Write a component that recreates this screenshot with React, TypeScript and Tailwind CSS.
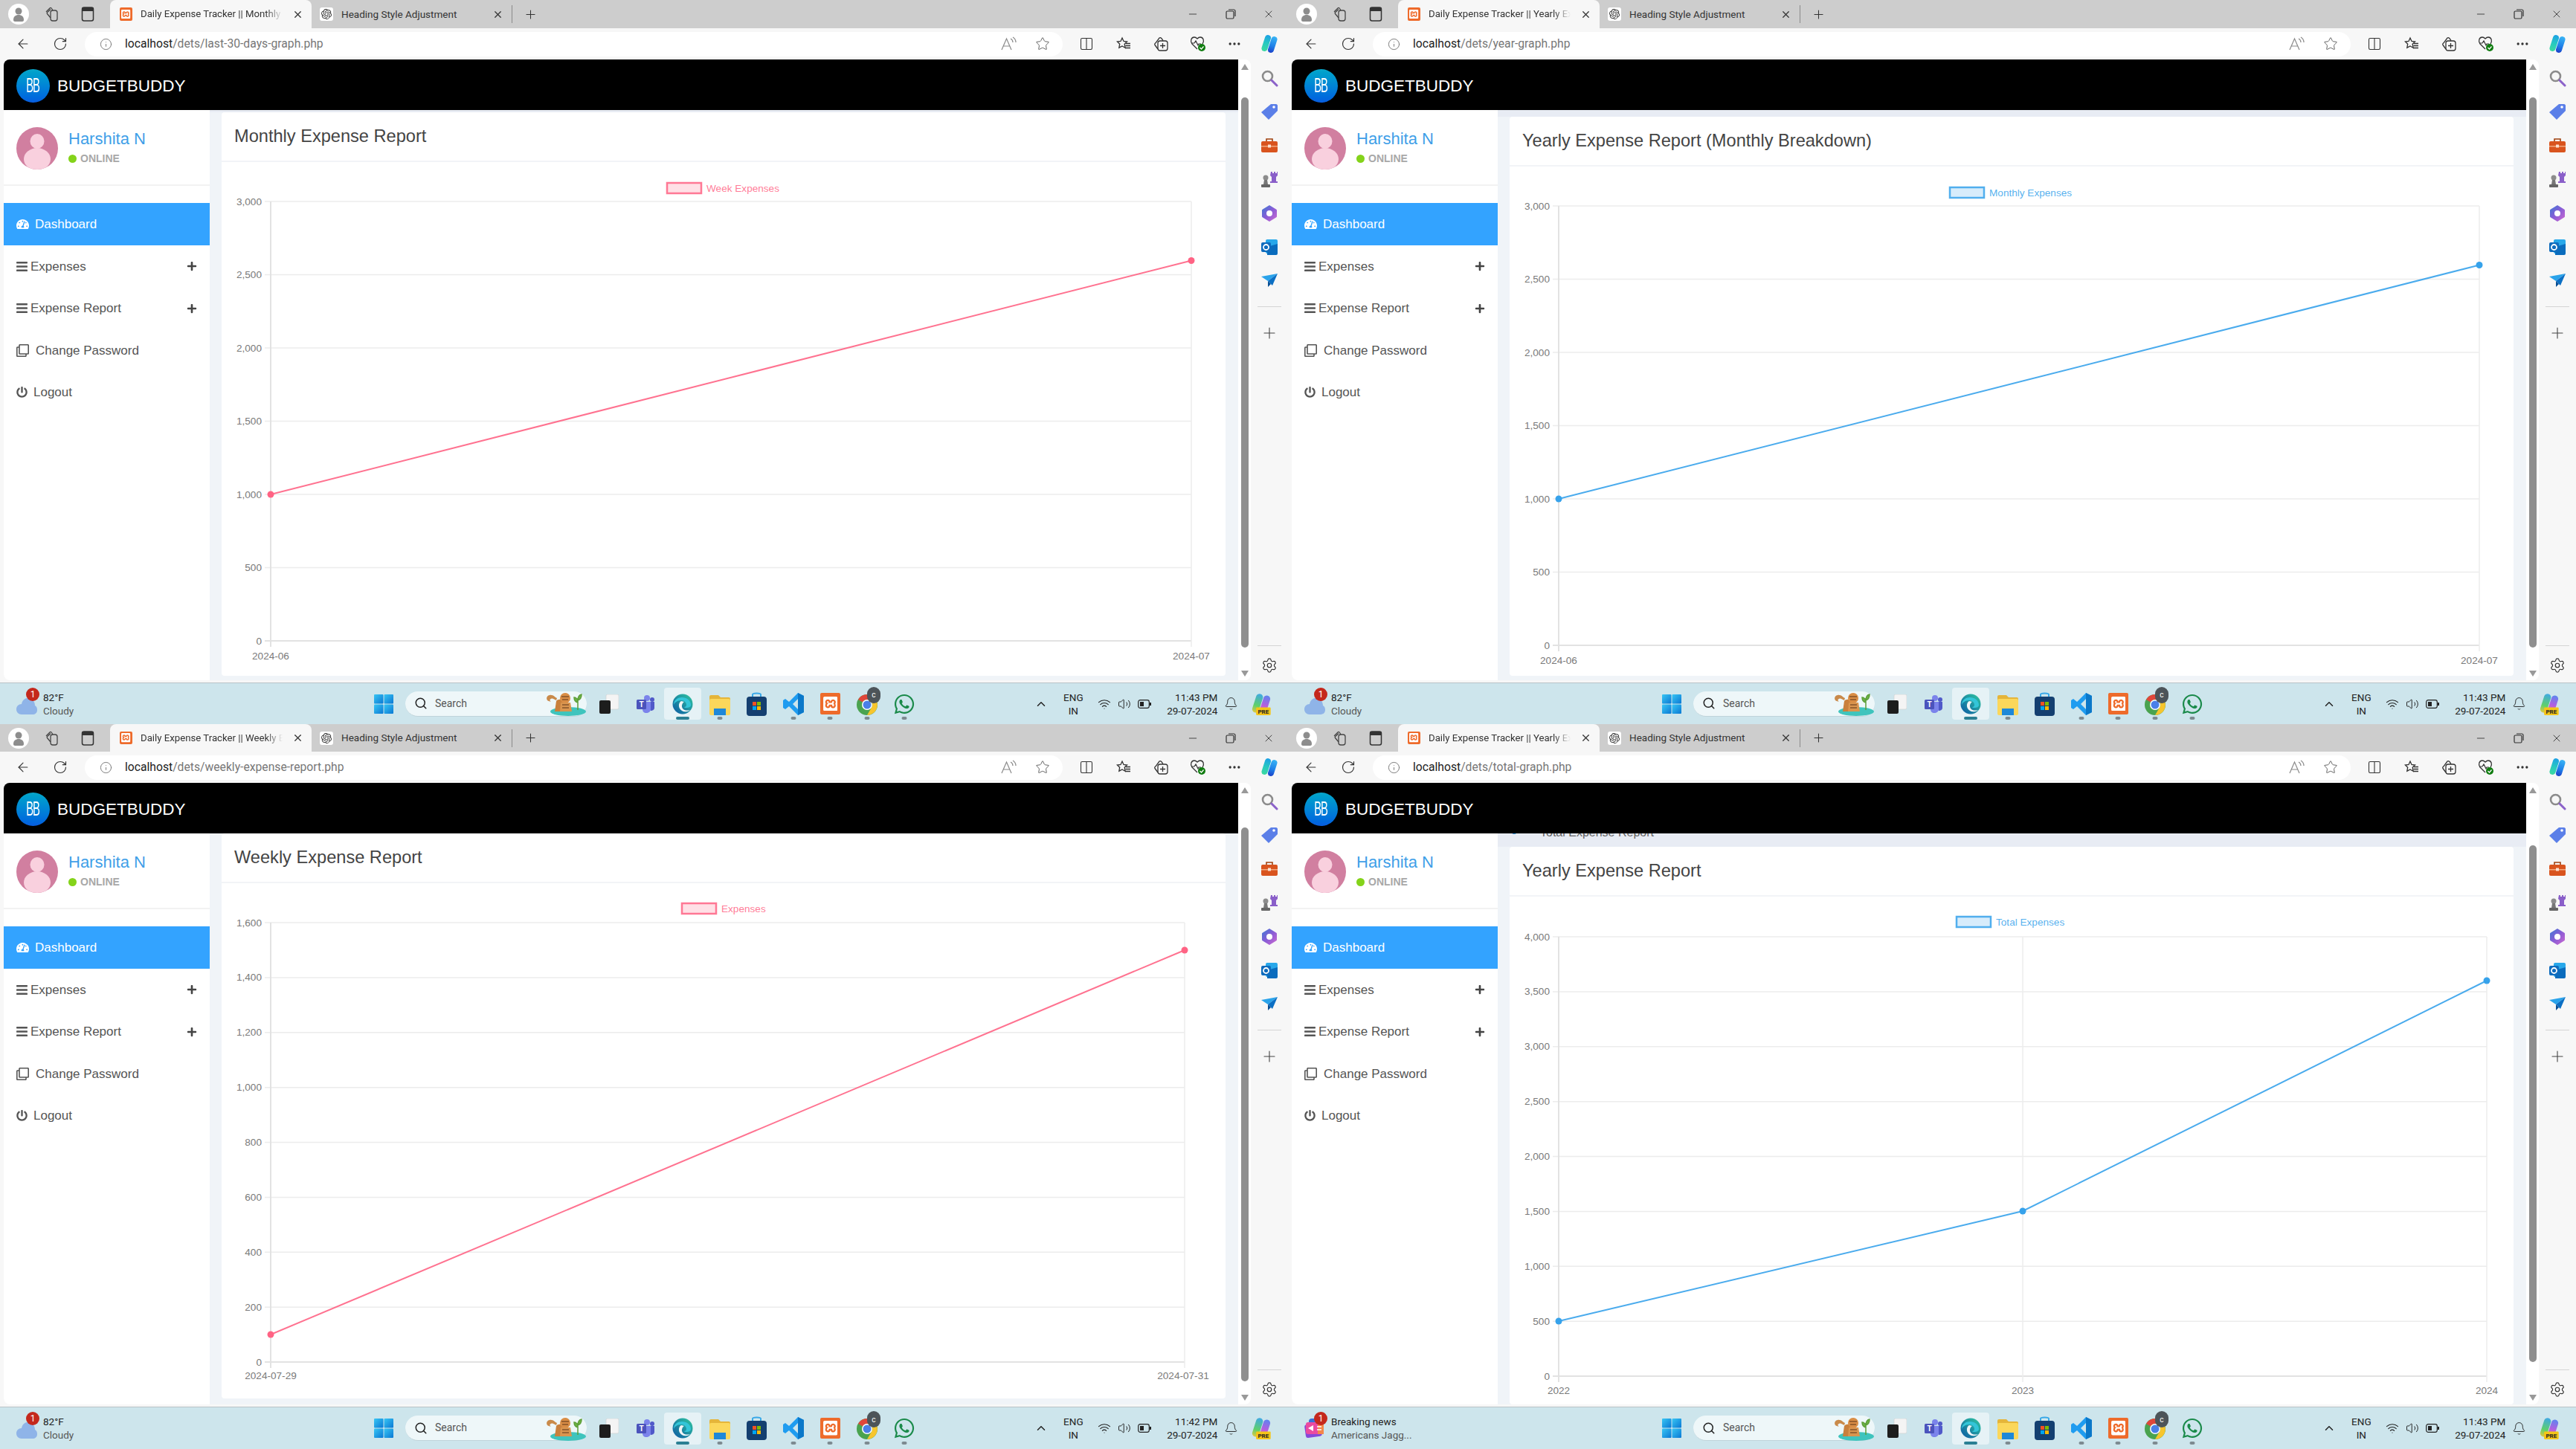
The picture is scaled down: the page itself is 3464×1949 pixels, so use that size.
import React from 'react';
import { ArrowLeft, RotateCw, Info, Star, Plus, X, Minus, Search, Settings, Bell, ChevronUp, Wifi, Volume2, Columns2, Ellipsis } from 'lucide-react';
import { FaBars, FaPlus, FaRegClone, FaPowerOff, FaTachometerAlt, FaWhatsapp } from 'react-icons/fa';
import { SiOpenai, SiXampp } from 'react-icons/si';

const Copilot = ({ s = 26, pre = false }: { s?: number; pre?: boolean }) => (
  <svg width={s} height={s} viewBox="0 0 26 26">
    <defs>
      <linearGradient id="cpa" gradientUnits="userSpaceOnUse" x1="12" y1="1" x2="5" y2="24"><stop offset="0" stopColor="#1c9fe8" /><stop offset=".5" stopColor="#27c9c0" /><stop offset="1" stopColor="#3fdc9a" /></linearGradient>
      <linearGradient id="cpb" gradientUnits="userSpaceOnUse" x1="21" y1="3" x2="14" y2="25"><stop offset="0" stopColor="#39b6f5" /><stop offset=".6" stopColor="#1f7fe8" /><stop offset="1" stopColor="#1c3fc8" /></linearGradient>
      <linearGradient id="cpc" gradientUnits="userSpaceOnUse" x1="12" y1="1" x2="5" y2="24"><stop offset="0" stopColor="#3fa8e8" /><stop offset=".6" stopColor="#5fd06a" /><stop offset="1" stopColor="#f0c83c" /></linearGradient>
      <linearGradient id="cpd" gradientUnits="userSpaceOnUse" x1="21" y1="3" x2="14" y2="25"><stop offset="0" stopColor="#5a86f0" /><stop offset=".5" stopColor="#b060e0" /><stop offset="1" stopColor="#f06ab0" /></linearGradient>
    </defs>
    <path d="M11 5 L6.500 19" stroke={pre ? 'url(#cpc)' : 'url(#cpa)'} strokeWidth="8" strokeLinecap="round" fill="none" />
    <path d="M19.500 7 L15 21" stroke={pre ? 'url(#cpd)' : 'url(#cpb)'} strokeWidth="8" strokeLinecap="round" fill="none" />
    {pre && <rect x="7" y="17" width="17" height="9" rx="1" fill="#f5c518" />}
    {pre && <text x="15.500" y="24.500" fontSize="7" fontWeight="700" textAnchor="middle" fill="#222" fontFamily="Roboto">PRE</text>}
  </svg>
);

const Profile = () => (
  <div className="w-[28px] h-[28px] rounded-full bg-white flex items-center justify-center shrink-0">
    <svg width="16" height="20" viewBox="0 0 16 20"><circle cx="8" cy="6" r="4.500" fill="#8d8d8d" /><path d="M1 18c0-5 3-7 7-7s7 2 7 7c0 1-1 2-2 2H3c-1 0-2-1-2-2z" fill="#8d8d8d" /></svg>
  </div>
);
const CollectionsTab = () => (
  <svg width="20" height="22" viewBox="0 0 20 22" fill="none" stroke="#444" strokeWidth="1.300"><rect x="8" y="6" width="9" height="14" rx="3" /><path d="M8 16 3.500 10.500c-.8-1 0-2 .8-2.600L8 4.500M11 6 9.500 3.500C9 2.500 8 2 7 3L2 8" /></svg>
);
const TabSide = () => (
  <svg width="18" height="22" viewBox="0 0 18 22"><rect x="1.500" y="2" width="15" height="18" rx="2.500" fill="none" stroke="#333" strokeWidth="1.500" /><rect x="1.500" y="2" width="15" height="5" fill="#333" /></svg>
);

const FavStar = () => (
  <svg width="20" height="20" viewBox="0 0 20 20" fill="none" stroke="#333" strokeWidth="1.300"><path d="M8 2l2 4.500 4.500.5-3.300 3.200.9 5L8 13l-4.200 2.200.9-5L1.400 7 6 6.500z" /><path d="M13 9.500h6M12.500 12.500h6.500M12 15.500h7" /></svg>
);
const CollIcon = () => (
  <svg width="20" height="20" viewBox="0 0 20 20" fill="none" stroke="#333" strokeWidth="1.300"><rect x="6" y="6" width="13" height="13" rx="3" /><path d="M12.500 9v7M9 12.500h7" /><path d="M6 17 2 11.500c-.7-1 0-2 1-2.700L8 2c1-.7 2-.3 3 .7l2 3" /></svg>
);
const Health = () => (
  <svg width="22" height="22" viewBox="0 0 22 22"><path d="M10 18 3 11C0 7 2 2 6 2c2 0 3 1 4 2 1-1 2-2 4-2 4 0 6 5 3 9" fill="none" stroke="#333" strokeWidth="1.300" /><path d="M2 10h4l2-3 3 6 1-2h3" fill="none" stroke="#333" strokeWidth="1.200" /><circle cx="16" cy="16" r="5" fill="#107c10" /><path d="M13.500 16l2 2 3-3.500" stroke="#fff" strokeWidth="1.200" fill="none" /></svg>
);
const ReadAloud = () => (
  <svg width="22" height="20" viewBox="0 0 22 20" fill="none" stroke="#8a8a8a" strokeWidth="1.200"><path d="M1 18 7.500 3 14 18M3.500 13h8" /><path d="M13 3c2 1 3 3 3 5M16 1c2.500 1.500 4 4 4 7" /></svg>
);

const HubSearch = () => (
  <svg width="24" height="24" viewBox="0 0 24 24"><circle cx="9.500" cy="9.500" r="6.500" fill="none" stroke="#8b8b8b" strokeWidth="2.600" /><path d="M15 15l7 7" stroke="#8b62c9" strokeWidth="3" strokeLinecap="round" /></svg>
);
const HubTag = () => (
  <svg width="24" height="24" viewBox="0 0 24 24"><path d="M14 2h7c1 0 2 1 2 2v7L11 23 1 13z" fill="#5b7fe8" /><circle cx="18" cy="6" r="1.800" fill="#fff" /></svg>
);
const HubBox = () => (
  <svg width="24" height="24" viewBox="0 0 24 24"><path d="M8 6V3h8v3" fill="none" stroke="#a0420f" strokeWidth="1.600" /><rect x="1" y="6" width="22" height="15" rx="2" fill="#d9541e" /><rect x="1" y="12" width="22" height="1.500" fill="#f2a97f" /><rect x="10" y="10.500" width="4" height="4" fill="#fbe0d0" /></svg>
);
const HubChess = () => (
  <svg width="24" height="24" viewBox="0 0 24 24"><path d="M14 2h2v2h2V2h2v2h2V2h1v5l-2 2v6h2v2H13v-2h2V9l-2-2z" fill="#8a5fc9" /><circle cx="7" cy="10" r="3.500" fill="#8c8c8c" /><path d="M5 13h4l1 6H4z" fill="#777" /><rect x="1" y="19" width="12" height="4" rx="1" fill="#666" /></svg>
);
const HubM365 = () => (
  <svg width="24" height="24" viewBox="0 0 24 24"><defs><linearGradient id="mg" x1="0" y1="0" x2="1" y2="1"><stop offset="0" stopColor="#3a7bd5" /><stop offset=".5" stopColor="#8a5cd6" /><stop offset="1" stopColor="#d06ad0" /></linearGradient></defs><path d="M12 1l9 5.500c1 .6 1 1 1 2v7c0 1 0 1.400-1 2L12 23l-9-5.500c-1-.6-1-1-1-2v-7c0-1 0-1.400 1-2z" fill="url(#mg)" /><circle cx="12" cy="12" r="4" fill="#fff" /></svg>
);
const HubOutlook = () => (
  <svg width="24" height="24" viewBox="0 0 24 24"><rect x="7" y="2" width="16" height="19" rx="2" fill="#28a8ea" /><path d="M9 12l14-4v13a2 2 0 0 1-2 2H9z" fill="#0a6cbd" /><rect x="1" y="6" width="13" height="13" rx="2" fill="#0f6cbd" /><circle cx="7.500" cy="12.500" r="3.500" fill="none" stroke="#fff" strokeWidth="1.800" /></svg>
);
const HubPlane = () => (
  <svg width="24" height="24" viewBox="0 0 24 24"><path d="M1 7l22-4-13 10z" fill="#2aa3ea" /><path d="M23 3 10 13l6 6z" fill="#0b6fc4" /><path d="M10 13v8l4-4z" fill="#084f94" /></svg>
);

const WinLogo = () => (
  <svg width="26" height="26" viewBox="0 0 26 26" className="shrink-0">
    <defs><linearGradient id="wl" x1="0" y1="0" x2="1" y2="1"><stop offset="0" stopColor="#38c6f4" /><stop offset="1" stopColor="#0a78d4" /></linearGradient></defs>
    <rect x="0" y="0" width="12.500" height="12.500" rx="1" fill="url(#wl)" /><rect x="13.500" y="0" width="12.500" height="12.500" rx="1" fill="url(#wl)" /><rect x="0" y="13.500" width="12.500" height="12.500" rx="1" fill="url(#wl)" /><rect x="13.500" y="13.500" width="12.500" height="12.500" rx="1" fill="url(#wl)" />
  </svg>
);
const Tiger = () => (
  <svg width="56" height="34" viewBox="0 0 56 34" className="shrink-0">
    <ellipse cx="31" cy="28" rx="24" ry="6" fill="#3fc4bd" />
    <path d="M5 14c-4-1-4-7 1-8s7 3 10 4l-1 3c-4-2-5-3-7-2-2 0-2 3 0 4z" fill="#c98a4a" />
    <path d="M15 14c2-3 7-3 10 0v14H13z" fill="#c9803c" />
    <circle cx="27" cy="10" r="7" fill="#d98d45" />
    <path d="M22 8h10M23 12h8" stroke="#5a3318" strokeWidth="1" />
    <path d="M21 16h13l2 12H20z" fill="#d9954f" />
    <path d="M23 19h9M23 23h9" stroke="#5a3318" strokeWidth="1" />
    <path d="M44 26V10M44 16c-4-1-5-4-5-7 3 0 5 3 5 7zM44 13c3-1 5-4 5-8-3 0-5 4-5 8z" stroke="#5d9e3a" strokeWidth="1.500" fill="#6db546" />
  </svg>
);
const TaskView = () => (
  <svg width="26" height="26" viewBox="0 0 26 26"><rect x="9" y="0" width="17" height="20" rx="2" fill="#f4f4f4" stroke="#cfcfcf" strokeWidth=".6" /><rect x="0" y="8" width="15" height="18" rx="2" fill="#1d1d1d" /></svg>
);
const Teams = () => (
  <svg width="26" height="26" viewBox="0 0 26 26"><circle cx="15" cy="5" r="4" fill="#7b83eb" /><circle cx="22" cy="7" r="3" fill="#5059c9" /><path d="M17 10h8v8c0 3-3 4-5 4z" fill="#5059c9" /><path d="M9 10h11v10c0 3-3 5-6 5-3 0-5-2-5-5z" fill="#7b83eb" /><rect x="1" y="7" width="13" height="13" rx="1.500" fill="#4b53bc" /><text x="7.500" y="17" fontSize="10" fontWeight="700" textAnchor="middle" fill="#fff" fontFamily="Roboto">T</text></svg>
);
const Edge = () => (
  <svg width="28" height="30" viewBox="0 0 28 28">
    <defs><linearGradient id="eg" x1="0" y1="1" x2="1" y2="0"><stop offset="0" stopColor="#0c59a4" /><stop offset="1" stopColor="#30c7a0" /></linearGradient></defs>
    <circle cx="14" cy="14" r="13.500" fill="url(#eg)" />
    <path d="M2 15C2 8 8 5 13 5c6 0 12 4 12 10 0 3-3 4-6 4-2 0-3-.5-3-1 2 0 3-1 3-3 0-3-3-6-7-6-5 0-9 3-10 6z" fill="#33c5d8" />
    <path d="M12 10c-3 2-4 6-2 10 2 3 5 5 10 4 1 0 3-1 4-2-3 1-8 1-10-2-2-3-1-7 2-9z" fill="#f2f6f8" />
  </svg>
);
const Folder = () => (
  <svg width="28" height="30" viewBox="0 0 28 30"><path d="M2 3h10l3 3h11a2 2 0 0 1 2 2v20H0V5a2 2 0 0 1 2-2z" fill="#e5b53a" /><rect x="0" y="8" width="28" height="22" rx="2" fill="#fbd75b" /><rect x="6" y="21" width="16" height="9" fill="#1e88d8" /></svg>
);
const Store = () => (
  <svg width="27" height="32" viewBox="0 0 27 32"><path d="M8 7V3c0-2 11-2 11 0v4" fill="none" stroke="#38a8e8" strokeWidth="2" /><rect x="0" y="6" width="27" height="26" rx="4" fill="#143f70" /><rect x="8" y="13" width="5" height="5" fill="#f25022" /><rect x="14" y="13" width="5" height="5" fill="#7fba00" /><rect x="8" y="19" width="5" height="5" fill="#00a4ef" /><rect x="14" y="19" width="5" height="5" fill="#ffb900" /></svg>
);
const VSCode = () => (
  <svg width="28" height="30" viewBox="0 0 28 30"><path d="M20 0l8 4v22l-8 4L8 18l-5 4-3-2v-10l3-2 5 4z" fill="#1f9cf0" /><path d="M20 0l8 4v22l-8 4z" fill="#0b78c9" /><path d="M20 8l-7 7 7 7z" fill="#cde5ec" /></svg>
);
const XamppIcon = ({ s }: { s: number }) => (
  <div className="rounded-[2px] bg-[#ee6b2b] flex items-center justify-center shrink-0" style={{ width: s, height: s * 1.04 }}>
    <SiXampp color="#fff" size={s * 0.72} />
  </div>
);
const Chrome = () => (
  <div className="relative w-[28px] h-[30px]">
    <svg width="28" height="28" viewBox="0 0 28 28" className="mt-[2px]">
      <circle cx="14" cy="14" r="14" fill="#4aa34f" />
      <path d="M14 0a14 14 0 0 1 12 7H14a7 7 0 0 0-6 3.500L2 7a14 14 0 0 1 12-7z" fill="#e0473b" />
      <path d="M26 7a14 14 0 0 1-12 21l6-10.500A7 7 0 0 0 20 10z" fill="#f7c52d" />
      <circle cx="14" cy="14" r="7" fill="#fff" /><circle cx="14" cy="14" r="5.500" fill="#4a7fe8" />
    </svg>
    <div className="absolute -top-[8px] left-[14px] w-[18px] h-[22px] rounded-full bg-[#4d5459] text-white text-[10px] flex items-center justify-center">c</div>
  </div>
);
const Cloud = () => (
  <svg width="28" height="26" viewBox="0 0 28 26"><path d="M7 25C3 25 0 22 0 18c0-4 3-7 7-7 1-5 5-9 10-8s8 5 8 10c2 1 3 3 3 6 0 4-3 6-6 6z" fill="#8fb4e8" /></svg>
);
const News = () => (
  <svg width="28" height="30" viewBox="0 0 28 30"><rect x="6" y="2" width="20" height="20" rx="4" fill="#3b6fd8" /><rect x="1" y="9" width="22" height="18" rx="3" fill="#8648d8" transform="rotate(-8 12 18)" /><rect x="2" y="7" width="24" height="16" rx="3" fill="#ea4aa0" /><rect x="18" y="7" width="8" height="16" fill="#f4874a" /><path d="M5 15l7-4v8z" fill="#fff" /><path d="M17 13h6M17 17h6" stroke="#fff" strokeWidth="1.500" /></svg>
);
const Avatar = () => (
  <svg width="56" height="57" viewBox="0 0 56 57" className="shrink-0">
    <defs><clipPath id="avc"><ellipse cx="28" cy="28.500" rx="28" ry="28.500" /></clipPath></defs>
    <ellipse cx="28" cy="28.500" rx="28" ry="28.500" fill="#d17fa0" />
    <g clipPath="url(#avc)"><ellipse cx="28" cy="19" rx="9.500" ry="10" fill="#f9d0de" /><ellipse cx="28" cy="43" rx="18" ry="15" fill="#f9d0de" /></g>
  </svg>
);

type Chart = {
  top: number; bottom: number; xr: number; ticks: string[]; color: string; pts: [number, number][]; mid?: number;
  legend: { x: number; cy: number; text: string }; xlabels: [number, string][]; labelY: number; vbY: number; vbH: number;
};

function ChartSvg({ c }: { c: Chart }) {
  const n = c.ticks.length - 1;
  const step = (c.bottom - c.top) / n;
  const fill = c.color === '#ff6384' ? 'rgba(255,99,132,0.2)' : 'rgba(54,162,235,0.2)';
  return (
    <svg width="1350" height={c.vbH} viewBox={`298 ${c.vbY} 1350 ${c.vbH}`} className="block" fontFamily="'Liberation Sans', sans-serif">
      <rect x={c.legend.x} y={c.legend.cy - 7} width="46" height="14" fill={fill} stroke={c.color} strokeWidth="2.500" strokeOpacity=".85" />
      <text x={c.legend.x + 53} y={c.legend.cy + 5} fontSize="13.600" fill={c.color} fillOpacity=".85">{c.legend.text}</text>
      {c.ticks.map((t, i) => {
        const y = c.top + i * step;
        return (
          <g key={t}>
            <line x1="356" x2={c.xr} y1={y} y2={y} stroke={i === n ? '#e2e2e2' : '#ececec'} strokeWidth={i === n ? 2 : 1.5} />
            <text x="352" y={y + 4.5} textAnchor="end" fontSize="13.600" fill="#7a7a7a">{t}</text>
          </g>
        );
      })}
      <line x1="364" x2="364" y1={c.top} y2={c.bottom + 8} stroke="#e2e2e2" strokeWidth="2" />
      {c.mid && <line x1={c.mid} x2={c.mid} y1={c.top} y2={c.bottom + 8} stroke="#ececec" strokeWidth="1.500" />}
      <line x1={c.xr} x2={c.xr} y1={c.top} y2={c.bottom + 8} stroke="#ececec" strokeWidth="1.500" />
      {c.xlabels.map(([x, t]) => (
        <text key={t} x={x} y={c.labelY + 5} textAnchor="middle" fontSize="13.600" fill="#7a7a7a">{t}</text>
      ))}
      <polyline points={c.pts.map((p) => p.join(',')).join(' ')} fill="none" stroke={c.color} strokeWidth="2" strokeOpacity=".9" />
      {c.pts.map((p) => <circle key={p[0]} cx={p[0]} cy={p[1]} r="4.500" fill={c.color} />)}
    </svg>
  );
}

const menuRow = 'h-[56.500px] flex items-center pl-[17px] text-[17px] text-[#555]';

function Sidebar() {
  return (
    <aside className="w-[277px] shrink-0 bg-white rounded-bl-lg">
      <div className="h-[102px] border-b-2 border-[#f2f2f2] pt-[23px] pl-[17px] flex gap-[14px]">
        <Avatar />
        <div>
          <div className="text-[22px] leading-[24px] mt-[4px] text-[#3f9fe8]">Harshita N</div>
          <div className="flex items-center mt-[6px]">
            <span className="w-[11px] h-[11px] rounded-full bg-[#84d31a]" />
            <span className="ml-[5px] text-[14px] leading-[16px] text-[#a8a8a8] font-bold">ONLINE</span>
          </div>
        </div>
      </div>
      <div className="h-[57px] mt-[23px] bg-[#33a3ff] flex items-center pl-[17px] text-white text-[17px]">
        <FaTachometerAlt size={17} />
        <span className="ml-[8px]">Dashboard</span>
      </div>
      <div className={menuRow}><FaBars size={17} className="-ml-[1px]" /><span className="ml-[3px]">Expenses</span><FaPlus size={14} className="ml-auto mr-[17px] text-[#444]" /></div>
      <div className={menuRow}><FaBars size={17} className="-ml-[1px]" /><span className="ml-[3px]">Expense Report</span><FaPlus size={14} className="ml-auto mr-[17px] text-[#444]" /></div>
      <div className={menuRow}><FaRegClone size={17} /><span className="ml-[9px] text-[17px]">Change Password</span></div>
      <div className={menuRow}><FaPowerOff size={15} /><span className="ml-[8px]">Logout</span></div>
    </aside>
  );
}

type Win = {
  tabTitle: string; url: string; bottom: boolean; title: string; time: string; news?: boolean;
  band: string; cardClass: string; scroll: string; chart: Chart; crumb?: boolean;
};

function Tabs({ w }: { w: Win }) {
  return (
    <div className={`${w.bottom ? 'h-[37px]' : 'h-[38px]'} bg-[#cdcdcd] flex items-center text-[#333] font-['Roboto',sans-serif]`}>
      <div className="ml-[11px]"><Profile /></div>
      <div className="ml-[21px] w-[20px]"><CollectionsTab /></div>
      <div className="ml-[29px] w-[19px]"><TabSide /></div>
      <div className="ml-[20px] h-full w-[271px] bg-[#f7f7f7] rounded-t-[8px] flex items-center pl-[13px] shrink-0">
        <XamppIcon s={17} />
        <div className="ml-[11px] w-[191px] whitespace-nowrap text-[13.200px] [mask-image:linear-gradient(to_right,black_88%,transparent)]">{w.tabTitle}</div>
        <X size={15} className="ml-[13px]" />
      </div>
      <div className="w-[259px] h-full flex items-center pl-[11px] shrink-0">
        <div className="w-[18px] h-[18px] bg-white rounded-[3px] flex items-center justify-center"><SiOpenai size={14} color="#333" /></div>
        <div className="ml-[11px] w-[155px] whitespace-nowrap text-[13.500px]">Heading Style Adjustment</div>
        <X size={15} className="ml-[48px]" />
      </div>
      <div className="ml-[10px] w-px h-[24px] bg-[#8a8a8a]" />
      <Plus size={19} strokeWidth={1.3} className="ml-[15px]" />
      <div className="ml-auto flex items-center gap-[35px] pr-[18px]">
        <Minus size={16} strokeWidth={1.3} />
        <svg width="16" height="16" viewBox="0 0 16 16" fill="none" stroke="#333" strokeWidth="1.200"><rect x="2" y="4" width="10" height="10" rx="1.500" /><path d="M5 2h7a2 2 0 0 1 2 2v7" /></svg>
        <X size={16} strokeWidth={1.3} />
      </div>
    </div>
  );
}

function Toolbar({ url }: { url: string }) {
  const [a, b] = [url.split('/')[0], url.slice(url.indexOf('/'))];
  return (
    <div className="h-[42px] bg-[#f7f7f7] flex items-center text-[#333] font-['Roboto',sans-serif]">
      <ArrowLeft size={20} strokeWidth={1.4} className="ml-[21px]" />
      <RotateCw size={20} strokeWidth={1.4} className="ml-[30px]" />
      <div className="ml-[23px] w-[1315px] h-[33px] rounded-full bg-white flex items-center pl-[20px] pr-[17px] shrink-0">
        <Info size={17} strokeWidth={1.2} className="text-[#666]" />
        <div className="ml-[17px] text-[15.700px]"><span className="text-[#222]">{a}</span><span className="text-[#777]">{b}</span></div>
        <div className="ml-auto flex items-center gap-[24px]">
          <ReadAloud />
          <Star size={20} strokeWidth={1.2} className="text-[#666]" />
        </div>
      </div>
      <Columns2 size={20} strokeWidth={1.3} className="ml-[22px]" />
      <div className="ml-[30px] w-[20px]"><FavStar /></div>
      <div className="ml-[30px] w-[20px]"><CollIcon /></div>
      <div className="ml-[29px] w-[22px]"><Health /></div>
      <Ellipsis size={20} strokeWidth={2} className="ml-[28px]" />
      <div className="ml-[24px] w-[26px]"><Copilot /></div>
    </div>
  );
}

function Page({ w }: { w: Win }) {
  return (
    <div className="w-[1660px] shrink-0 flex flex-col rounded-tl-lg rounded-bl-lg overflow-hidden font-['Liberation_Sans',sans-serif]">
      <header className="h-[68px] bg-black flex items-center pl-[17px] pt-[3px] shrink-0">
        <div className="w-[45px] h-[45px] rounded-full bg-gradient-to-b from-[#09a6c9] to-[#0a5de0] flex items-center justify-center text-white">
          <span className="text-[27px] leading-none tracking-[-2px] scale-x-[.55]">BB</span>
        </div>
        <span className="ml-[10px] text-white text-[22.500px]">BUDGETBUDDY</span>
      </header>
      <div className="flex-1 flex min-h-0">
        <Sidebar />
        <main className="flex-1 flex flex-col bg-[#f0f4f8] pl-[16px] pr-[17px] min-w-0">
          <div className={`${w.band} -ml-[16px] -mr-[17px] bg-[#e8ecf4] overflow-hidden shrink-0 pl-[19px]`}>
            {w.crumb && <div className="-mt-[11px] flex items-center text-[#666] text-[16px] leading-[20px]"><span className="text-[#3f9fe8] w-[38px]">▪</span>Total Expense Report</div>}
          </div>
          <section className={`${w.cardClass} bg-white rounded-[4px] overflow-hidden`}>
            <div className="h-[67px] border-b-2 border-[#f2f4f7] flex items-center pl-[17px] pt-[1px] text-[#444] text-[23.600px]">{w.title}</div>
            <ChartSvg c={w.chart} />
          </section>
        </main>
      </div>
    </div>
  );
}

function Scroll({ cls }: { cls: string }) {
  return (
    <div className="w-[17px] shrink-0 bg-white rounded-r-lg flex flex-col items-center pt-[6px] pb-[5px]">
      <div className="w-0 h-0 border-l-[5px] border-r-[5px] border-b-[8px] border-l-transparent border-r-transparent border-b-[#999]" />
      <div className={`${cls} w-[10px] rounded-full bg-[#8f8f8f]`} />
      <div className="mt-auto w-0 h-0 border-l-[5px] border-r-[5px] border-t-[8px] border-l-transparent border-r-transparent border-t-[#999]" />
    </div>
  );
}

function Hub() {
  return (
    <div className="w-[50px] shrink-0 flex flex-col items-center pt-[13px] pb-[3px] gap-[21.400px]">
      <HubSearch /><HubTag /><HubBox /><HubChess /><HubM365 /><HubOutlook /><HubPlane />
      <div className="w-[32px] h-px bg-[#d4d4d4] mt-[1px]" />
      <Plus size={24} strokeWidth={1.1} className="mt-[2px] text-[#444]" />
      <div className="mt-auto w-[32px] h-px bg-[#d4d4d4]" />
      <Settings size={22} strokeWidth={1.3} className="-mt-[6px] mb-[6px] text-[#333]" />
    </div>
  );
}

function Slot({ children, dot, active }: { children: React.ReactNode; dot?: boolean; active?: boolean }) {
  return (
    <div className={`relative w-[49.600px] h-[43px] flex items-center justify-center shrink-0 rounded-[4px] ${active ? 'bg-[#e6f2f6]' : ''}`}>
      {children}
      {dot && <span className="absolute bottom-[0px] left-1/2 -translate-x-1/2 w-[7px] h-[4px] rounded-full bg-[#7d8a90]" />}
      {active && <span className="absolute bottom-[0px] left-1/2 -translate-x-1/2 w-[18px] h-[4px] rounded-full bg-[#2a7f93]" />}
    </div>
  );
}

function Taskbar({ w }: { w: Win }) {
  return (
    <div className={`${w.bottom ? 'h-[56px]' : 'h-[55px]'} bg-[#cde5ec] flex items-center font-['Roboto',sans-serif] text-[13.500px] text-[#222] shrink-0`}>
      <div className="w-[503px] shrink-0 pl-[22px] flex items-center">
        <div className="relative w-[28px] h-[30px] flex items-end">
          {w.news ? <News /> : <Cloud />}
          <span className="absolute -top-[7px] left-[13px] w-[18px] h-[18px] rounded-full bg-[#c4281c] text-white text-[12px] flex items-center justify-center">1</span>
        </div>
        <div className="ml-[8px] leading-[18px]">
          <div>{w.news ? 'Breaking news' : '82°F'}</div>
          <div className="text-[#555]">{w.news ? 'Americans Jagg...' : 'Cloudy'}</div>
        </div>
      </div>
      <WinLogo />
      <div className="ml-[16px] w-[244px] h-[34px] rounded-full bg-[#eef7f9] flex items-center pl-[12px] shrink-0 border-b border-[#c0d4da]">
        <Search size={18} strokeWidth={2} />
        <span className="ml-[10px] text-[#555] text-[14px]">Search</span>
        <div className="ml-auto"><Tiger /></div>
      </div>
      <div className="ml-[5px] flex items-center">
        <Slot><TaskView /></Slot>
        <Slot><Teams /></Slot>
        <Slot active><Edge /></Slot>
        <Slot dot><Folder /></Slot>
        <Slot><Store /></Slot>
        <Slot dot><VSCode /></Slot>
        <Slot dot><XamppIcon s={27} /></Slot>
        <Slot dot><Chrome /></Slot>
        <Slot dot><FaWhatsapp size={30} color="#1a8a4a" /></Slot>
      </div>
      <ChevronUp size={18} strokeWidth={2} className="ml-[151px]" />
      <div className="ml-[14px] w-[40px] text-center leading-[18px]"><div>ENG</div><div>IN</div></div>
      <Wifi size={18} strokeWidth={1.5} className="ml-[13px]" />
      <Volume2 size={18} strokeWidth={1.3} className="ml-[9px]" />
      <svg width="18" height="12" viewBox="0 0 18 12" className="ml-[9px]"><rect x=".7" y=".7" width="14.600" height="10.600" rx="2.500" fill="none" stroke="#222" strokeWidth="1.200" /><rect x="3" y="3" width="5" height="6" fill="#222" /><rect x="16" y="4" width="2" height="4" fill="#222" /></svg>
      <div className="ml-[9px] w-[80px] text-right leading-[18px]"><div>{w.time}</div><div>29-07-2024</div></div>
      <Bell size={19} strokeWidth={1.2} className="ml-[9px]" />
      <div className="ml-[16px] w-[30px]"><Copilot s={30} pre /></div>
    </div>
  );
}

function Window({ w }: { w: Win }) {
  return (
    <div className="flex flex-col min-h-0 bg-[#f7f7f7]">
      <Tabs w={w} />
      <Toolbar url={w.url} />
      <div className="flex-1 flex min-h-0 pl-[5px] pb-[3px] border-b border-[#b9c3c6]">
        <Page w={w} />
        <Scroll cls={w.scroll} />
        <Hub />
      </div>
      <Taskbar w={w} />
    </div>
  );
}

const pink = '#ff6384';
const blue = '#36a2eb';
const t3000 = ['3,000', '2,500', '2,000', '1,500', '1,000', '500', '0'];

const windows: Win[] = [
  {
    tabTitle: 'Daily Expense Tracker || Monthly', url: 'localhost/dets/last-30-days-graph.php', bottom: false, title: 'Monthly Expense Report', time: '11:43 PM',
    band: 'h-[3px]', cardClass: 'h-[758px] shrink-0', scroll: 'mt-[37px] h-[740px]',
    chart: { top: 271, bottom: 862, xr: 1602, ticks: t3000, color: pink, pts: [[364, 665], [1602, 350.5]], legend: { x: 897, cy: 253, text: 'Week Expenses' }, xlabels: [[364, '2024-06'], [1602, '2024-07']], labelY: 882, vbY: 218, vbH: 691 },
  },
  {
    tabTitle: 'Daily Expense Tracker || Yearly Ex', url: 'localhost/dets/year-graph.php', bottom: false, title: 'Yearly Expense Report (Monthly Breakdown)', time: '11:43 PM',
    band: 'h-[9px]', cardClass: 'h-[752px] shrink-0', scroll: 'mt-[37px] h-[740px]',
    chart: { top: 277, bottom: 868, xr: 1602, ticks: t3000, color: blue, pts: [[364, 671], [1602, 356.5]], legend: { x: 890, cy: 259, text: 'Monthly Expenses' }, xlabels: [[364, '2024-06'], [1602, '2024-07']], labelY: 888, vbY: 224, vbH: 685 },
  },
  {
    tabTitle: 'Daily Expense Tracker || Weekly E', url: 'localhost/dets/weekly-expense-report.php', bottom: true, title: 'Weekly Expense Report', time: '11:42 PM',
    band: 'h-0', cardClass: 'h-[760px] shrink-0', scroll: 'mt-[46px] h-[745px]',
    chart: { top: 1240, bottom: 1831, xr: 1593, ticks: ['1,600', '1,400', '1,200', '1,000', '800', '600', '400', '200', '0'], color: pink, pts: [[364, 1794], [1593, 1277]], legend: { x: 917, cy: 1221, text: 'Expenses' }, xlabels: [[364, '2024-07-29'], [1591, '2024-07-31']], labelY: 1849, vbY: 1187, vbH: 694 },
  },
  {
    tabTitle: 'Daily Expense Tracker || Yearly Ex', url: 'localhost/dets/total-graph.php', bottom: true, title: 'Yearly Expense Report', time: '11:43 PM', news: true, crumb: true,
    band: 'h-[18px]', cardClass: 'flex-1 min-h-0', scroll: 'mt-[70px] h-[695px]',
    chart: { top: 1260, bottom: 1851, xr: 1612, mid: 988, ticks: ['4,000', '3,500', '3,000', '2,500', '2,000', '1,500', '1,000', '500', '0'], color: blue, pts: [[364, 1777], [988, 1629], [1612, 1319]], legend: { x: 899, cy: 1240, text: 'Total Expenses' }, xlabels: [[364, '2022'], [988, '2023'], [1612, '2024']], labelY: 1870, vbY: 1206, vbH: 682 },
  },
];

export default function App() {
  return (
    <div className="w-[3464px] h-[1949px] grid grid-cols-[1732px_1732px] grid-rows-[974px_975px] overflow-hidden bg-[#f7f7f7]">
      {windows.map((w) => <Window key={w.url} w={w} />)}
    </div>
  );
}
